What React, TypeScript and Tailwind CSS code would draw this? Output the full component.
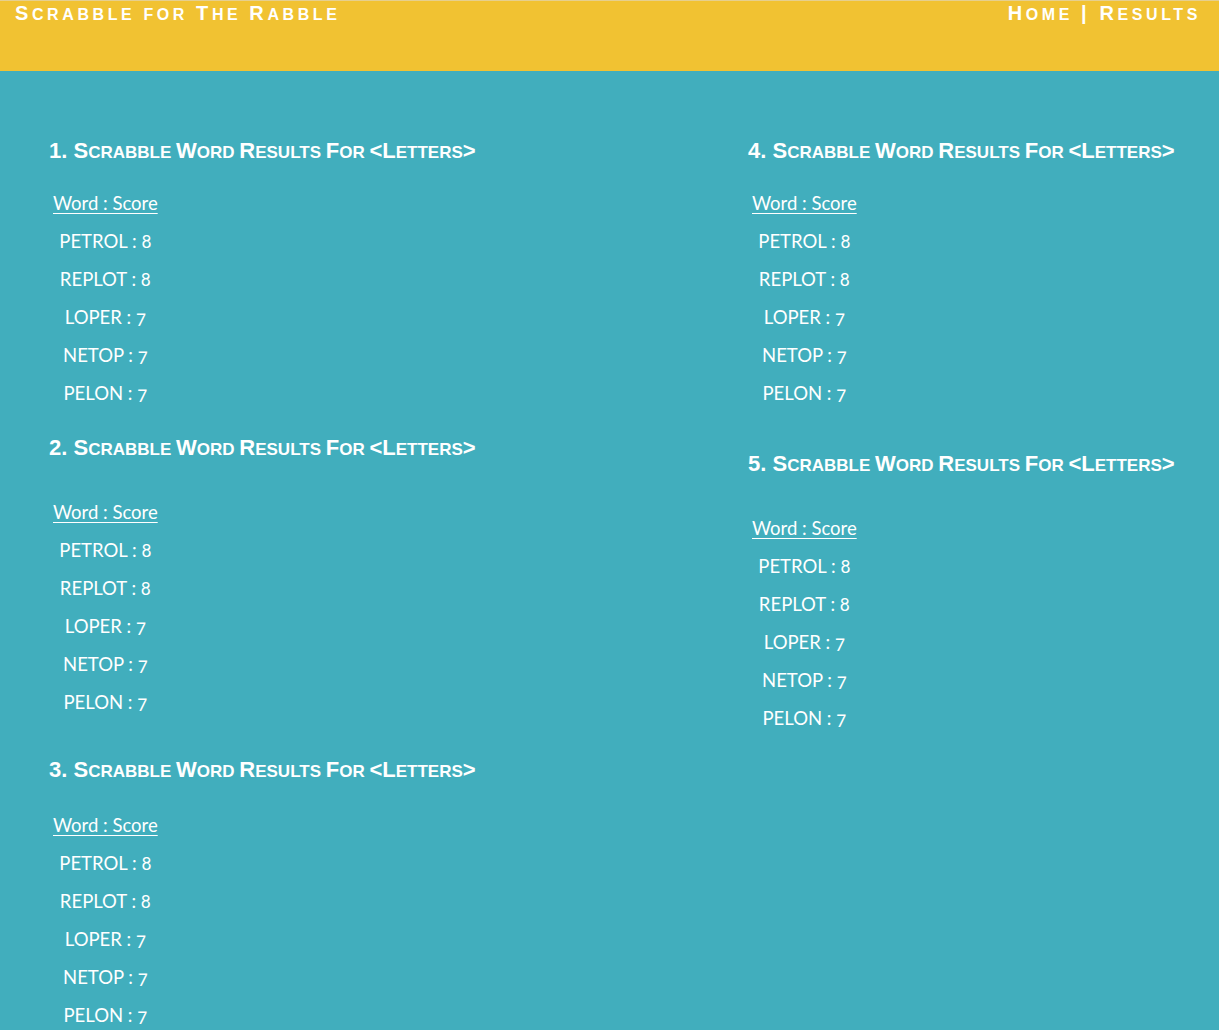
const words = [
  { word: "PETROL", score: 8 },
  { word: "REPLOT", score: 8 },
  { word: "LOPER", score: 7 },
  { word: "NETOP", score: 7 },
  { word: "PELON", score: 7 },
];

// fake small caps: lowercase runs are shown as smaller capitals
const SmallCaps = ({ text, small }: { text: string; small: string }) => {
  const runs = text.match(/[a-z ]+|[^a-z ]+/g) ?? [];
  return (
    <>
      {runs.map((r, i) =>
        /[a-z]/.test(r) ? (
          <span key={i} className={`uppercase leading-none ${small}`}>
            {r}
          </span>
        ) : (
          <span key={i}>{r}</span>
        )
      )}
    </>
  );
};

const ResultBlock = ({ n, headGap, className }: { n: number; headGap: string; className?: string }) => (
  <section className={className}>
    <h2 className="whitespace-pre [font-family:'Liberation_Sans',Arial,sans-serif] text-[22px] font-bold leading-[22px] text-white">
      <SmallCaps text={`${n}. Scrabble Word Results For <Letters>`} small="text-[17px]" />
    </h2>
    <ul className={`ml-[4px] flex w-fit flex-col items-center [font-family:'Lato',sans-serif] text-[18.5px] leading-[38px] text-white [font-variant-numeric:oldstyle-nums] ${headGap}`}>
      <li className="underline underline-offset-[3px]">Word : Score</li>
      {words.map((w) => (
        <li key={w.word}>
          {w.word} : {w.score}
        </li>
      ))}
    </ul>
  </section>
);

export default function App() {
  return (
    <div className="min-h-[1030px] bg-[#41aebd]">
      <header className="flex h-[71px] items-start justify-between whitespace-pre border-t border-[#e6cf8e] bg-[#f1c232] pl-[15px] pr-[18px] [font-family:'Liberation_Sans',Arial,sans-serif] text-[20px] font-bold leading-[25px] tracking-[3.6px] text-white">
        <span>
          <SmallCaps text="Scrabble for The Rabble" small="text-[16px]" />
        </span>
        <nav>
          <SmallCaps text="Home | Results" small="text-[16px]" />
        </nav>
      </header>

      <main className="flex pt-[69px]">
        <div className="w-[748px] pl-[49px]">
          <ResultBlock n={1} headGap="mt-[22px]" />
          <ResultBlock n={2} headGap="mt-[34px]" className="mt-[25px]" />
          <ResultBlock n={3} headGap="mt-[25px]" className="mt-[38px]" />
        </div>
        <div>
          <ResultBlock n={4} headGap="mt-[22px]" />
          <ResultBlock n={5} headGap="mt-[34px]" className="mt-[41px]" />
        </div>
      </main>
    </div>
  );
}
